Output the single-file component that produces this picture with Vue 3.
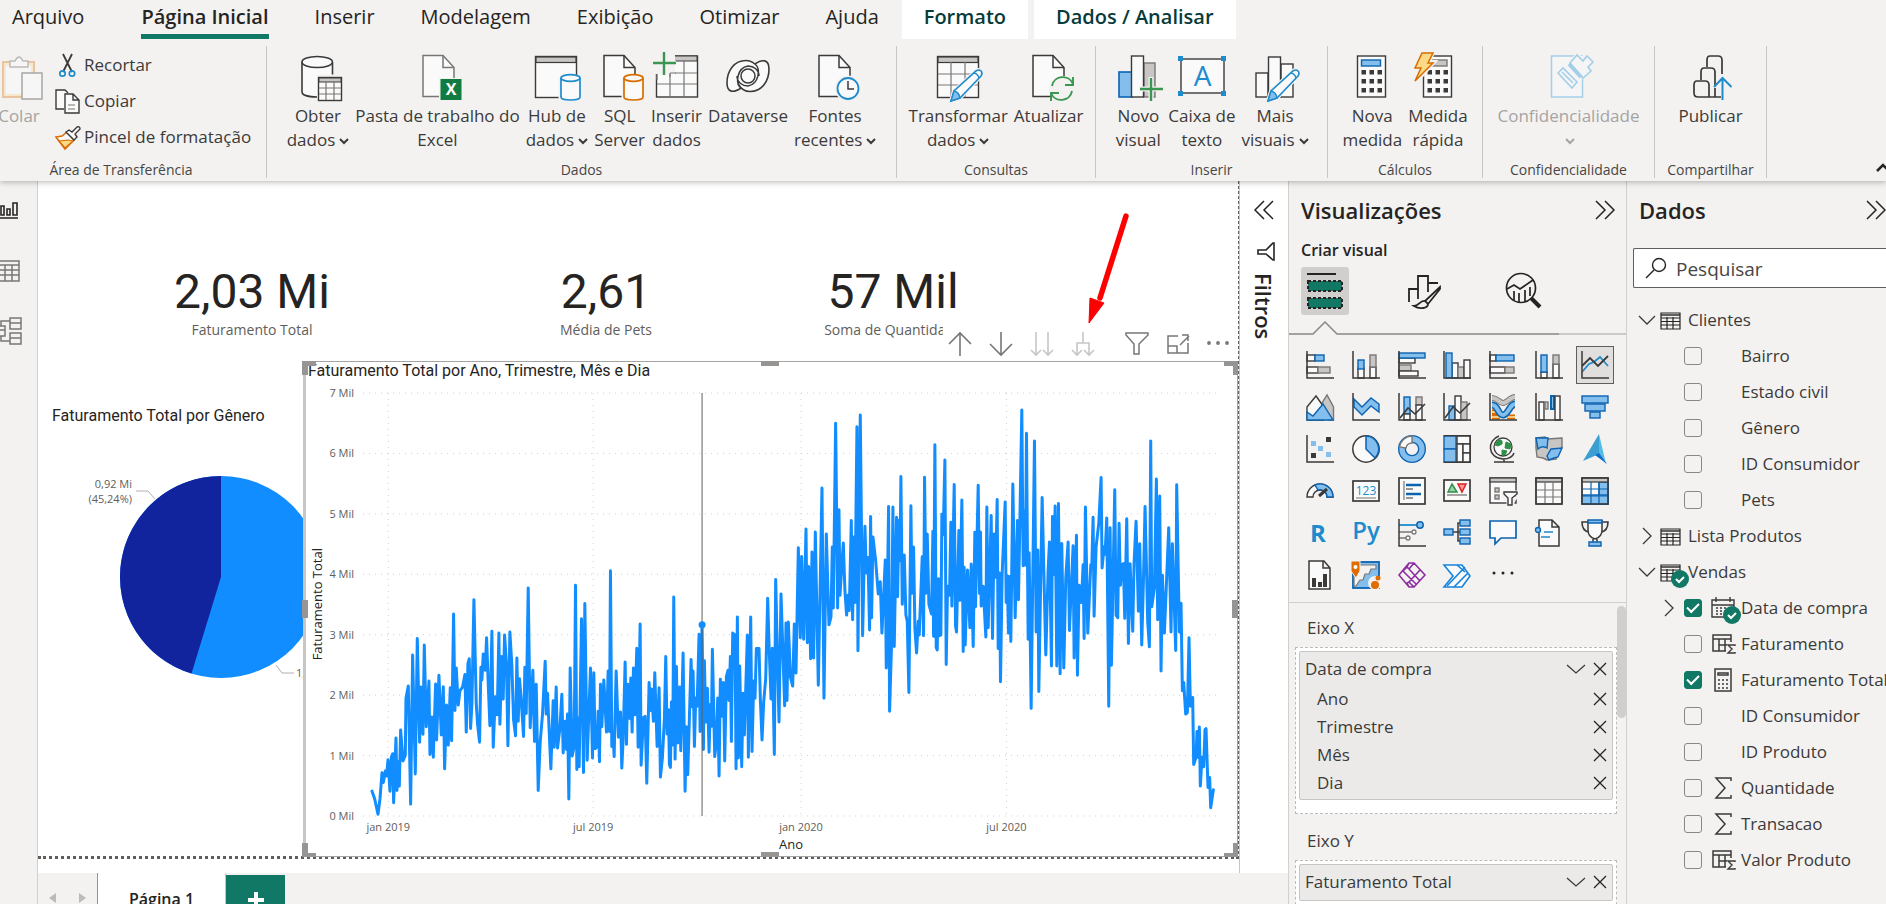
<script setup>
import { ref } from 'vue'

const DARK = '#3b3a39'
const BLUE = '#1e8bcd'
const DEEP = '#0c63b0'
const SKY = '#83beec'
const GREY = '#c8c6c4'
const MID = '#797774'
const PAPER = '#fafafa'

const box = (x, y, w, h, fill = PAPER, stroke = DARK, sw = 1.4) =>
  `<rect x="${x}" y="${y}" width="${w}" height="${h}" fill="${fill}" stroke="${stroke}" stroke-width="${sw}"/>`
const line = (d, stroke = DARK, sw = 1.4, fill = 'none') =>
  `<path d="${d}" fill="${fill}" stroke="${stroke}" stroke-width="${sw}"/>`
const page = (x, stroke = DARK) => line(`M${x} 3.5h20l11 12v29h-31z`, stroke, 1.5, PAPER) + line(`M${x + 20} 3.5v12h11`, stroke, 1.5)
const cylinder = (stroke) =>
  line('M28 26v20c0 3 19 3 19 0v-20', '#f3f2f1', 5, PAPER) +
  line('M28 26v19c0 4 19 4 19 0v-19', stroke, 1.7, PAPER) +
  `<ellipse cx="37.5" cy="26" rx="9.5" ry="3.3" fill="${PAPER}" stroke="${stroke}" stroke-width="1.7"/>`
const pencil =
  line('M17 49l3-10 22-20q3-2 5 0t0 5l-21 22z', '#f3f2f1', 4, PAPER) +
  line('M17 49l3-10 22-20q3-2 5 0t0 5l-21 22z', BLUE, 1.6, PAPER) +
  line('M17 49l3-10q5 1 6 7z', BLUE, 1.4, SKY) +
  line('M40 21q4 1 5 5', BLUE, 1.4)
const plus = (x, y) =>
  line(`M${x - 12} ${y}h24M${x} ${y - 12}v24`, '#f3f2f1', 5) + line(`M${x - 11} ${y}h23M${x} ${y - 11}v23`, '#3a9650', 2.4)
const calcKeys = (x, top) => {
  let keys = ''
  for (let r = 0; r < 3; r++) for (let c = 0; c < 3; c++) keys += `<rect x="${x + c * 8}" y="${top + r * 9}" width="4.5" height="4.5" fill="${DARK}"/>`
  return keys
}

const ribbonIcons = {
  paste:
    line('M8 10h31v35H8z', '#e8c4a0', 2, '#f6e8cf') + box(11, 14, 25, 28, '#f6f6f6', 'none', 0) +
    line('M15 9h5q4-8 8 0h5v6H15z', '#bdbbb9', 1.5, '#f6f6f6') + box(27, 21, 20, 26, '#f6f6f6', '#a9a7a5', 1.5),
  getData:
    line('M8 10v30c0 3 6 5 15 5h15V10', 'none', 0, PAPER) + line('M8 10v30c0 3 6 5 15 5M38.5 10v15', DARK, 1.6) +
    `<ellipse cx="23.2" cy="10" rx="15.2" ry="5.5" fill="${PAPER}" stroke="${DARK}" stroke-width="1.6"/>` +
    line('M23 24h17', '#f3f2f1', 3) + box(24.5, 25.5, 23, 23) + box(25, 26, 22, 4, GREY, DARK, 1) + line('M25 36h22M25 42h22M32 30v18M40 30v18', MID, 1.2),
  excel: page(10, '#797774') + '<rect x="26" y="26" width="23" height="23" fill="#f3f2f1"/><rect x="27.5" y="27" width="21" height="21" fill="#107c41"/><text x="38" y="43" text-anchor="middle" font-family="Open Sans" font-weight="700" font-size="16" fill="#fff">X</text>',
  hub: box(2.5, 4.5, 41, 41) + box(3, 5, 40, 5.5, GREY, DARK, 1.2) + cylinder(BLUE),
  sql: page(8) + cylinder('#d86c00'),
  insertData: box(3.5, 4, 41, 41) + box(4, 4, 40, 5, GREY, DARK, 1) + line('M4 21h40M4 32h40M17 9v36M31 9v36', MID, 1.2) + line('M0 3h22v19H0z', 'none', 0, '#f3f2f1') + line('M17 21h6M17 21v4M4 22v6', MID, 1.2) + plus(11, 11),
  dataverse:
    line('M34 16C31 11 27 8.5 22 8.5 10 8.5 3 19 3 31c0 10 7 10 14 5', DARK, 1.6, PAPER) +
    line('M14 32c3 5 7 7.5 12 7.5C38 39.5 45 29 45 17 45 7 38 7 31 12', DARK, 1.6, PAPER) +
    line('M17 36c-6-5-4-20 7-22 6 0 11 4 11 10M31 12c6 5 4 20-7 22-6 0-11-4-11-10', DARK, 1.5) +
    `<circle cx="24" cy="24" r="7" fill="${PAPER}" stroke="${DARK}" stroke-width="1.5"/>`,
  recent: page(8) + `<circle cx="37" cy="36.5" r="13" fill="#f3f2f1"/><circle cx="37" cy="36.5" r="10.5" fill="${PAPER}" stroke="${BLUE}" stroke-width="1.8"/>` + line('M37 29v8h6', DARK, 1.5),
  transform: box(3.5, 4.5, 41, 41) + box(4, 5, 40, 5.5, GREY, DARK, 1.2) + line('M4 22h40M4 33h40M17 10v35M31 10v35', MID, 1.2) + pencil,
  refresh: page(8) + '<circle cx="37" cy="37" r="13" fill="#f3f2f1"/>' + line('M27 34c2-11 17-12 21-2M48 25v8h-8M47 39c-2 11-17 12-21 2M26 49v-8h8', '#3a9650', 1.9),
  newVisual: box(30, 11, 11, 34, GREY, MID) + box(5, 20, 13, 25, SKY, DEEP, 1.6) + box(17.5, 4, 12, 41) + plus(37, 37),
  textBox: box(3, 7, 43, 34) + `<g fill="${BLUE}"><rect x="0" y="4" width="5" height="5"/><rect x="43" y="4" width="5" height="5"/><rect x="0" y="39" width="5" height="5"/><rect x="43" y="39" width="5" height="5"/></g><text x="24.5" y="34" text-anchor="middle" font-family="Open Sans" font-size="28" fill="${BLUE}">A</text>`,
  moreVisuals: box(5, 21, 12, 24) + box(30, 12, 12, 33) + box(17.5, 5, 12, 40) + pencil,
  measure: box(9.5, 4, 28, 41) + box(13.5, 8, 19, 6, SKY, DEEP) + calcKeys(13.5, 18),
  quick: box(9.5, 4, 28, 41) + box(17, 8, 16, 6, GREY, MID) + calcKeys(13.5, 18) + line('M7 0h12l-4 10h5L2 30l5-14H1z', '#f3f2f1', 4) + line('M8 1h11l-5 10h5L1 29l6-13H1z', '#d86c00', 1.5, '#fbd986'),
  label: box(7.5, 4, 31, 41, '#f5f5f5', '#a3cfe8', 1.5) + line('M26 11l7-8 5 4 5-5 6 7-5 5 3 4-8 7z', '#f3f2f1', 4, '#f5f5f5') + line('M26 11l7-8 6 6 4-5 6 6-5 5 3 4-8 7z', '#a3cfe8', 1.6, '#f5f5f5') + line('M25 12l12 13', '#a3cfe8', 4) + line('M14 21l5-5 14 14-5 6zM18 20l11 11', '#a3cfe8', 1.6, '#f5f5f5'),
  publish: line('M35 22V8q0-4-4-4h-8q-3 0-3 4v7M28 33V20q0-4-4-4h-7q-3 0-3 4v8M34 45h-12V33q0-4-4-4h-8q-3 0-3 4v8q0 4 4 4h12M28 36v9', DARK, 1.7) + line('M35.5 48V26M27 35l8.5-9 9 9', BLUE, 2),
}

const smallIcons = {
  cut: line('M8 1l9 18M17 1L8 19', DARK, 1.8) + `<circle cx="7.5" cy="20.5" r="2.7" fill="none" stroke="${BLUE}" stroke-width="1.7"/><circle cx="17" cy="20.5" r="2.7" fill="none" stroke="${BLUE}" stroke-width="1.7"/>`,
  copy: line('M9 20H1V1h9l3 3', DARK, 1.4, PAPER) + line('M10 5h8l6 6v13H10zM18 5v6h6', DARK, 1.4, PAPER) + line('M13 16h7M13 20h7', MID, 1.2),
  brush: line('M1 12l6-1 5-4 7 8-9 9z', '#d86c00', 1.6, PAPER) + line('M4 16l9-1 5 1-8 7z', '#d86c00', 1.2, '#fbd986') + line('M11 7l3-2 3 2 5-5q3-1 3 2l-5 5 2 3-3 3z', DARK, 1.4, PAPER),
}

const axis = line('M1 0v27h27', DARK, 1.5)
const vizIcons = [
  { name: 'Gráfico de barras empilhadas', svg: box(1, 4, 8, 6) + box(9, 4, 9, 6, SKY, DEEP) + box(1, 16, 11, 6) + box(12, 16, 12, 6, GREY, MID) + axis },
  { name: 'Gráfico de colunas empilhadas', svg: box(6, 17, 6, 10) + box(6, 9, 6, 9, SKY, DEEP) + box(18, 16, 6, 11) + box(18, 4, 6, 12, GREY, MID) + axis },
  { name: 'Gráfico de barras clusterizado', svg: box(1, 7, 16, 5) + box(1, 14, 12, 6, GREY, MID) + box(1, 20, 19, 5) + box(1, 2, 26, 5, SKY, DEEP) + axis },
  { name: 'Gráfico de colunas clusterizado', svg: box(9, 12, 6, 15) + box(15, 16, 6, 11, GREY, MID) + box(21, 9, 6, 18) + box(3, 2, 6, 25, SKY, DEEP) + axis },
  { name: 'Gráfico 100% de barras empilhadas', svg: box(1, 4, 6, 6) + box(7, 4, 18, 6, SKY, DEEP) + box(1, 16, 15, 6) + box(16, 16, 9, 6, GREY, MID) + axis },
  { name: 'Gráfico 100% de colunas empilhadas', svg: box(6, 21, 6, 6) + box(6, 4, 6, 17, SKY, DEEP) + box(18, 13, 6, 14) + box(18, 4, 6, 9, GREY, MID) + axis },
  { name: 'Gráfico de linhas', selected: true, svg: line('M1 21l7-8 5-2 6-5 8 9', BLUE, 1.8) + line('M1 15l8-8 8 8 10-10', DARK, 1.8) + axis },
  { name: 'Gráfico de área', svg: line('M27.5 27V14L21 2l-8 13 9 12z', MID, 1.4, GREY) + line('M1 27V14l9-11 10 14-2 10z', DARK, 1.4, PAPER) + line('M1 27v-8l6 4 10-12 10 16z', DEEP, 1.4, SKY) },
  { name: 'Gráfico de área empilhada', svg: line('M2 6l8 8 9-9 8 6v8l-8-6-9 9-8-8z', DEEP, 1.4, SKY) + axis },
  { name: 'Linha e coluna empilhada', svg: box(6, 4, 6, 17, SKY, DEEP) + box(6, 21, 6, 6) + box(18, 4, 6, 8, GREY, MID) + box(18, 12, 6, 15) + line('M2 25l8-10 7 6 10-10', DARK, 1.6) + axis },
  { name: 'Linha e coluna clusterizada', svg: box(6, 13, 6, 14, SKY, DEEP) + box(12, 3, 6, 24) + box(18, 9, 6, 18, GREY, MID) + line('M2 25l8-11 7 6 10-10', DARK, 1.6) + axis },
  { name: 'Gráfico da faixa de opções', svg: line('M3 19h5M20 13h6M3 24h8M18 24h8', '#d86c00', 5) + line('M3 19h5M20 13h6M3 24h8M18 24h8', '#fbc97b', 2) + line('M3 5c6 0 7 5 11 5s7-6 12-6', MID, 6) + line('M3 5c6 0 7 5 11 5s7-6 12-6', GREY, 4) + line('M3 12c6 0 6 10 11 10s7-11 12-11', DEEP, 7) + line('M3 12c6 0 6 10 11 10s7-11 12-11', SKY, 4) + axis },
  { name: 'Gráfico de cascata', svg: box(4, 9, 5, 18) + box(10, 9, 3, 7, GREY, MID) + box(16, 3, 3, 13, SKY, DEEP, 2) + box(20, 3, 5, 24) + axis },
  { name: 'Funil', svg: box(1, 3, 26, 7, SKY, DEEP) + box(4, 11, 20, 7, SKY, DEEP) + box(9, 19, 10, 6, SKY, DEEP) },
  { name: 'Gráfico de dispersão', svg: `<g fill="${SKY}"><rect x="5" y="6" width="5" height="5"/><rect x="12" y="11" width="5" height="5"/><rect x="20" y="17" width="5" height="5"/></g><g fill="${DARK}"><rect x="20" y="2" width="5" height="5"/><rect x="5" y="18" width="5" height="5"/></g>` + axis },
  { name: 'Gráfico de pizza', svg: `<circle cx="14" cy="14" r="13.2" fill="${PAPER}" stroke="${DARK}" stroke-width="1.5"/>` + line('M14 1a13 13 0 0 1 9 22l-9-9z', DEEP, 1.5, SKY) },
  { name: 'Gráfico de rosca', svg: `<circle cx="14" cy="14" r="10" fill="none" stroke="${DEEP}" stroke-width="8"/><circle cx="14" cy="14" r="10" fill="none" stroke="${SKY}" stroke-width="5.3"/>` + line('M1.5 12a12.8 12.8 0 0 1 12.5-11v7a6 6 0 0 0-6 5z', MID, 1.4, PAPER) },
  { name: 'Treemap', svg: box(1, 1, 12, 13, SKY, DEEP) + box(1, 14, 12, 13, SKY, DEEP) + box(14, 1, 13, 8) + box(14, 9, 6, 18) + box(20, 9, 7, 9) + box(20, 18, 7, 9) + line('M.7.7h26.6v26.6H.7', DARK, 1.2) },
  { name: 'Mapa', svg: `<circle cx="14" cy="12" r="9" fill="${PAPER}" stroke="${DARK}" stroke-width="1.3"/>` + line('M9 5q5-1 4 4l-4 2-3-1zM17 7l5 2-1 5-5-1zM13 15l5 1-2 4h-3z', '#2e8f46', 1, '#2e8f46') + line('M10 1c-12 4-12 22 4 23 7 0 10-3 11-6M15 24v3M5 27h20', DARK, 1.5) },
  { name: 'Mapa coroplético', svg: line('M1 3l9-1 3 2 14-1v9l-3 4-3 8-9 1-4-2-6-1-1-9z', MID, 1.4, GREY) + line('M1 3h12l-1 10q-5-3-9 1zM16 14l11-1-4 9-4 1-5 2-2-4z', DEEP, 1.4, SKY) },
  { name: 'Azure Maps', svg: '<path d="M18-1L2 26l16-7z" fill="#3a9fd0"/><path d="M18-1l7 30-7-10z" fill="#52bde4"/><path d="M14 20l4-2 8 11z" fill="#0b6bcb"/>' },
  { name: 'Medidor', svg: line('M1 20a13 13 0 0 1 26 0h-6a7 7 0 0 0-14 0z', DARK, 1.4, PAPER) + line('M9 8a13 13 0 0 1 18 12h-6a7 7 0 0 0-9-7z', DEEP, 1.4, SKY) + line('M13 19l8-7', DARK, 3) },
  { name: 'Cartão', svg: box(1, 4, 26, 20, PAPER, DARK, 1.7) + `<text x="14" y="18" text-anchor="middle" font-family="Open Sans" font-size="12" fill="${BLUE}">123</text>` + line('M4 21h20', MID, 1) },
  { name: 'Cartão de várias linhas', svg: box(1, 1, 26, 26, PAPER, DARK, 1.7) + line('M6 4v19', MID, 1.2) + line('M8 8h15M8 17h15', DEEP, 2.3) + line('M8 12h7M8 21h7', MID, 1.5) },
  { name: 'KPI', svg: box(1, 3, 26, 21, PAPER, DARK, 1.7) + line('M5 15l4-8 5 8z', '#2e8f46', 1.5, '#9bd1a6') + line('M15 7h8l-4 8z', '#d22', 1.5, '#ff9d9d') + line('M4 18h20', MID, 1.3) },
  { name: 'Segmentação de dados', svg: box(1, 1, 26, 25) + box(1, 1, 26, 4, GREY, DARK, 1.2) + box(6, 11, 4, 4, GREY, MID) + box(6, 18, 4, 4, GREY, MID) + line('M14 15h14v5l-4 4v4h-5v-4l-5-4z', '#f3f2f1', 3) + line('M15 15h13v2l-5 4v7h-4v-7l-4-4z', DARK, 1.4, PAPER) },
  { name: 'Tabela', svg: box(1, 1, 26, 26) + box(1, 1, 26, 4, GREY, DARK, 1.2) + line('M1 13h26M1 20h26M10 5v22M18 5v22', MID, 1.2) + box(1, 1, 26, 26, 'none') },
  { name: 'Matriz', svg: box(1, 1, 26, 26) + box(18, 5, 9, 22, SKY, DEEP) + box(1, 18, 26, 9, SKY, DEEP) + box(1, 1, 26, 4, GREY, DARK, 1.2) + line('M1 12h26M1 19h26M10 5v22M18 5v22', DEEP, 1.2) + box(1, 1, 26, 26, 'none') },
  { name: 'Visual do script R', svg: `<text x="12" y="23" text-anchor="middle" font-family="Open Sans" font-weight="700" font-size="24" fill="${BLUE}">R</text>` },
  { name: 'Visual do Python', svg: `<text x="14" y="20" text-anchor="middle" font-family="Open Sans" font-weight="600" font-size="24" fill="${BLUE}">Py</text>` },
  { name: 'Principais influenciadores', svg: line('M1 6h18', BLUE, 1.8) + line('M1 13h13M1 19h7', MID, 1.3) + `<circle cx="22" cy="6" r="3.2" fill="${SKY}" stroke="${DEEP}" stroke-width="1.5"/><circle cx="16" cy="13" r="2" fill="#fff" stroke="${MID}" stroke-width="1.3"/><circle cx="10" cy="19" r="2" fill="#fff" stroke="${MID}" stroke-width="1.3"/>` + axis },
  { name: 'Árvore de decomposição', svg: line('M10 13h7M17 4h-2v18h3', DARK, 1.5) + box(1, 10, 9, 6, SKY, DEEP) + box(17, 1, 10, 6, SKY, DEEP) + box(17, 10, 10, 6, SKY, DEEP) + box(17, 19, 10, 6, SKY, DEEP) },
  { name: 'P e R', svg: line('M1 2h26v17H12l-6 6v-6H1z', DEEP, 1.7, PAPER) },
  { name: 'Narrativa', svg: line('M4 8V1h13l7 7v19H4V14M17 1v7h7', DARK, 1.5, PAPER) + line('M9 13h9M6 18h9', BLUE, 1.5) + `<circle cx="3" cy="11" r="2.5" fill="${SKY}" stroke="${DEEP}" stroke-width="1.4"/>` },
  { name: 'Metas', svg: line('M7 3H1q0 9 7 10M21 3h6q0 9-7 10', DARK, 1.6) + line('M7 2h14v9q0 7-7 9-7-2-7-9zM12 20v4h4v-4', DARK, 1.5, PAPER) + line('M7 1h14v3H7z', DEEP, 1.4, SKY) + line('M8 23h12v4H8z', DEEP, 1.4, SKY) },
  { name: 'Relatório paginado', svg: line('M3 0h15l6 7v21H3zM17 0v7h7', DARK, 1.5, PAPER) + `<g fill="${DARK}"><rect x="6" y="17" width="4" height="9"/><rect x="12" y="21" width="4" height="5"/><rect x="17" y="13" width="4" height="13"/></g>` },
  { name: 'ArcGIS Maps', svg: box(1, 1, 26, 26, SKY, DEEP, 1.8) + line('M8 4h16v4h-5l-2 5h-4l-2 6H8l-4 6H2V14z', MID, 1.2, '#f3f2f1') + '<circle cx="23" cy="22" r="7" fill="#f3f2f1"/><path d="M-1 0h9v10l-4 7-5-7z" fill="#e06c00" stroke="#f3f2f1"/><circle cx="3.5" cy="6" r="2" fill="#fff"/><circle cx="23" cy="24" r="4" fill="#e06c00"/><circle cx="26" cy="17" r="2.5" fill="#e06c00"/>' },
  { name: 'Power Apps', svg: line('M1 14L11 2h5l11 12-11 12h-5zM16 2l-5 6 11 12M11 2l-2 4 2 2M16 26l-5-5 11-12M11 26l-2-4 2-1M9 6L5 10l13 13', '#8b2fa0', 1.6) },
  { name: 'Power Automate', svg: line('M1 4h18l8 11-8 11H1l9-11z', '#1584dd', 1.6, PAPER) + line('M14 4l8 7M4 25L22 6M11 26L25 12', '#1584dd', 1.6) },
]

const ribbonGroups = [
  { label: 'Dados', size: 'g-data', buttons: [
    { icon: 'getData', lines: ['Obter', 'dados'], menu: true },
    { icon: 'excel', lines: ['Pasta de trabalho do', 'Excel'] },
    { icon: 'hub', lines: ['Hub de', 'dados'], menu: true },
    { icon: 'sql', lines: ['SQL', 'Server'] },
    { icon: 'insertData', lines: ['Inserir', 'dados'] },
    { icon: 'dataverse', lines: ['Dataverse'] },
    { icon: 'recent', lines: ['Fontes', 'recentes'], menu: true },
  ] },
  { label: 'Consultas', size: 'g-query', buttons: [
    { icon: 'transform', lines: ['Transformar', 'dados'], menu: true },
    { icon: 'refresh', lines: ['Atualizar'] },
  ] },
  { label: 'Inserir', size: 'g-insert', buttons: [
    { icon: 'newVisual', lines: ['Novo', 'visual'] },
    { icon: 'textBox', lines: ['Caixa de', 'texto'] },
    { icon: 'moreVisuals', lines: ['Mais', 'visuais'], menu: true },
  ] },
  { label: 'Cálculos', size: 'g-calc', buttons: [
    { icon: 'measure', lines: ['Nova', 'medida'] },
    { icon: 'quick', lines: ['Medida', 'rápida'] },
  ] },
  { label: 'Confidencialidade', size: 'g-label', buttons: [
    { icon: 'label', lines: ['Confidencialidade', ''], menu: true, disabled: true },
  ] },
  { label: 'Compartilhar', size: 'g-share', buttons: [{ icon: 'publish', lines: ['Publicar'] }] },
]

const clipboard = [
  { icon: 'cut', text: 'Recortar' },
  { icon: 'copy', text: 'Copiar' },
  { icon: 'brush', text: 'Pincel de formatação' },
]

const tabs = ['Inserir', 'Modelagem', 'Exibição', 'Otimizar', 'Ajuda']
const cards = [
  { id: 'card-a', value: '2,03 Mi', label: 'Faturamento Total' },
  { id: 'card-b', value: '2,61', label: 'Média de Pets' },
  { id: 'card-c', value: '57 Mil', label: 'Soma de Quantidade' },
]
const yTicks = [7, 6, 5, 4, 3, 2, 1, 0]
const xTicks = [
  { at: 265, text: 'jan 2019' },
  { at: 880, text: 'jul 2019' },
  { at: 1504, text: 'jan 2020' },
  { at: 2121, text: 'jul 2020' },
]
const left = (x) => ((x - 189) / 2570) * 100 + '%'

const series2019 =
  '216,1254 224,1275 234,1318 240,1275 246,1203 250,1230 256,1198 260,1212 264,1167 270,1254 274,1160 278,1150 281,1286 288,1106 291,1252 295,1172 298,1240 302,1084 309,1170 316,1155 318,996 325,962 332,1290 338,876 346,1206 352,830 359,1118 363,965 369,1096 373,848 379,1075 387,948 390,1152 396,1048 400,1160 407,956 410,1112 417,932 424,1098 430,964 434,1192 440,1015 445,1126 451,967 455,1114 461,762 465,1030 469,912 475,1015 480,975 488,965 495,930 499,1090 504,900 508,886 512,1080 516,1012 522,722 529,1010 533,1068 539,1118 543,910 546,945 550,873 556,918 560,828 566,980 570,1072 576,810 580,1132 586,992 592,1042 597,815 600,1068 606,880 610,998 614,820 620,905 624,1128 630,812 636,905 641,1055 647,1100 651,884 655,1060 659,942 664,1000 671,1102 675,910 679,1038 685,690 691,1078 699,918 704,1116 709,957 715,1252 721,1118 728,1040 736,893 739,1040 743,982 753,1192 760,1003 763,1132 769,965 773,1134 780,1080 786,985 790,1148 796,1060 800,1138 803,1040 807,1276 811,912 817,1156 823,1130 827,682 831,1194 834,1050 838,1186 845,775 851,1202 855,733 862,1168 872,912 878,1162 882,925 886,1136 892,1130 895,1032 899,1172 902,957 906,1075 912,945 920,1090 925,920 929,1088 932,642 936,1130 940,1100 943,1158 949,920 956,1104 962,1034 966,1190 970,1110 976,895 980,1124 984,957 990,1052 993,940 997,1090 1001,912 1005,1042 1011,857 1015,1132 1021,790 1024,1182 1031,1050 1036,1046 1041,1232 1048,952 1052,1030 1055,970 1061,1060 1065,925 1072,1130 1078,967 1082,1215 1088,1160 1094,1050 1098,880 1102,1095 1106,1028 1109,1180 1112,1188 1115,1006 1119,1126 1122,715 1126,1165 1130,908 1134,1120 1140,965 1143,1142 1150,870 1156,1254 1160,1075 1164,1208 1174,888 1178,1020 1180,920 1184,1130 1188,995 1192,1018 1198,818 1201,1088 1207,792 1211,1138 1214,892 1218,1062 1223,968 1228,1146 1232,1013 1235,1074 1238,860 1245,1158 1250,1118 1254,995 1258,1212 1262,943 1266,1046 1271,952 1275,1170 1280,936 1285,918 1288,1002 1292,880 1295,1116 1299,815 1306,820 1309,1192 1313,770 1316,1162 1320,906 1326,1186 1330,982 1334,1098 1343,820 1346,1160 1353,770 1357,1144 1362,948 1366,996 1370,858 1378,858 1382,1000 1387,1112 1392,1005 1398,942 1404,718 1408,845 1414,998 1418,857 1424,1152 1428,666 1434,910 1438,1062 1444,706 1455,1017 1459,787 1462,1002 1466,784 1472,936 1479,962 1484,790 1489,926'
const series2020 =
  '56,578 62,828 66,602 72,832 79,526 83,842 87,630 93,886 97,590 102,884 107,534 116,960 127,412 133,996 140,540 148,792 154,770 158,576 161,745 168,232 174,745 178,472 181,710 191,565 196,700 201,765 205,710 209,752 215,502 219,778 223,548 226,730 232,242 235,864 242,209 249,822 256,518 260,648 265,605 270,806 273,491 276,772 280,548 288,612 296,706 302,672 307,815 317,612 320,912 327,463 330,1032 336,840 340,465 344,852 351,493 354,714 358,502 361,614 364,380 368,735 374,598 379,765 383,782 388,980 394,461 397,704 402,576 406,802 411,870 416,782 419,820 428,603 432,822 435,382 439,704 443,540 448,735 456,762 460,532 462,824 466,292 470,855 473,862 477,664 480,822 484,820 487,485 491,542 496,334 500,902 504,685 510,710 514,507 517,740 524,402 528,795 531,812 538,530 541,724 547,445 551,866 554,632 557,848 564,640 571,800 575,623 581,852 586,535 588,742 596,404 600,705 603,534 605,740 611,685 619,826 622,465 626,800 635,488 639,830 644,540 648,660 653,444 656,858 660,648 663,950 668,650 677,451 680,730 683,655 687,815 690,658 694,838 700,401 707,772 714,502 717,722 727,195 731,628 735,475 738,626 741,260 746,832 749,592 755,1024 765,281 770,812 775,584 778,977 788,438 799,876 806,640 810,562 816,906 819,491 824,652 827,462 832,906 837,455 842,928 847,566 853,912 859,660 866,562 870,808 881,572 884,884 891,543 894,932 899,682 906,730 911,625 914,830 918,465 925,815 934,625 937,632 941,493 944,768 950,575 958,510 965,383 968,634 974,575 977,596 982,495 988,1018 992,522 996,904 1006,417 1010,765 1015,772 1019,510 1023,682 1028,625 1032,622 1036,774 1042,497 1047,844 1052,622 1060,810 1064,620 1070,504 1077,754 1081,567 1087,848 1092,675 1097,463 1105,784 1110,853 1114,281 1117,742 1125,690 1131,387 1135,778 1141,434 1145,920 1149,654 1155,815 1160,705 1168,522 1175,812 1179,567 1189,863 1192,403 1200,812 1205,732 1209,975 1213,952 1219,1040 1224,1036 1229,828 1233,1018 1240,994 1243,1180 1250,1160 1253,1088 1256,1160 1260,1076 1263,1240 1268,1160 1273,1186 1277,1083 1280,1080 1286,1244 1291,1216 1294,1300 1302,1250'
const shifted = series2020
  .split(' ')
  .map((p) => p.split(','))
  .map(([x, y]) => `${+x + 1440},${y}`)
  .join(' ')
const points = series2019 + ' ' + shifted

const G = '#797774'
const L = '#c8c6c4'
const chartTools = [
  { name: 'Fazer drill up', svg: line('M14 26V3M3 14L14 3l11 11', G, 1.6) },
  { name: 'Fazer drill down', svg: line('M14 2v23M3 14l11 11 11-11', G, 1.6) },
  { name: 'Próximo nível', svg: line('M8 2v23M3 20l5 5 5-5M20 2v23M15 20l5 5 5-5', L, 1.6) },
  { name: 'Expandir nível', svg: line('M14 2v11M8 25V13h12v12M3 20l5 5 5-5M15 20l5 5 5-5', L, 1.6) },
  { name: 'Filtros', wide: true, svg: line('M3 3h22v2l-9 9v10h-5V14L3 5z', G, 1.5) },
  { name: 'Modo de foco', svg: line('M14 6H4v17h20V13M4 16h9v7M16 15l9-9M18 5h6v6', G, 1.5) },
  { name: 'Mais opções', svg: `<g fill="${G}"><circle cx="4" cy="13" r="1.9"/><circle cx="13" cy="13" r="1.9"/><circle cx="22" cy="13" r="1.9"/></g>` },
]

const tableGlyph = line('M1 3h19v16H1zM1 8h19M1 11.5h19M1 15h19M7 7v12M13 7v12', '#252423', 1.2) + line('M1 5h19', '#252423', 1.4)
const fieldIcons = {
  date: line('M1 4h22v17H1zM1 9h22M5 1v5M19 1v5', DARK, 1.4) + '<path d="M5 12h14M5 15h14M5 18h14" stroke="#3b3a39" stroke-width="1.5" stroke-dasharray="2 2"/>',
  calcColumn: line('M20 10V3H2v16h13M2 7h18M8 7v12M14 7v12M8 13h8', DARK, 1.5) + line('M24 14v-1h-7l4 4-4 4h7v-1', DARK, 1.4),
  measure: line('M4 1h16v22H4zM7 5h10v2H7z', DARK, 1.5) + '<path d="M7 12h11M7 16h11M7 20h11" stroke="#3b3a39" stroke-width="1.5" stroke-dasharray="2 2"/>',
  sum: line('M20 5V2H5l9 10L5 22h15v-3', DARK, 1.5),
}
const tables = ref([
  { name: 'Clientes', open: true, fields: [
    { name: 'Bairro' }, { name: 'Estado civil' }, { name: 'Gênero' }, { name: 'ID Consumidor' }, { name: 'Pets' },
  ] },
  { name: 'Lista Produtos', open: false, fields: [] },
  { name: 'Vendas', open: true, used: true, fields: [
    { name: 'Data de compra', icon: 'date', on: true, nested: true, used: true },
    { name: 'Faturamento', icon: 'calcColumn' },
    { name: 'Faturamento Total', icon: 'measure', on: true },
    { name: 'ID Consumidor' },
    { name: 'ID Produto' },
    { name: 'Quantidade', icon: 'sum' },
    { name: 'Transacao', icon: 'sum' },
    { name: 'Valor Produto', icon: 'calcColumn' },
  ] },
])
const hierarchy = ['Ano', 'Trimestre', 'Mês', 'Dia']
const chevronDown = line('M2 6l9 8 9-8', '#3b3a39', 1.3)
const cross = line('M4 4l12 12M16 4L4 16', '#252423', 1.3)
</script>

<template>
  <div class="app">
    <header class="ribbon">
      <nav class="tabs">
        <button class="tab file">Arquivo</button>
        <button class="tab active"><span>Página Inicial</span></button>
        <button v-for="t in tabs" :key="t" class="tab">{{ t }}</button>
        <button class="tab context">Formato</button>
        <button class="tab context">Dados / Analisar</button>
      </nav>
      <div class="groups">
        <section class="group g-clip">
          <div class="clip-body">
            <button class="tool paste" disabled>
              <svg class="tool-icon" viewBox="0 0 48 48" v-html="ribbonIcons.paste"></svg>
              <span>Colar</span>
            </button>
            <div class="clip-list">
              <button v-for="c in clipboard" :key="c.icon" class="clip-item">
                <svg viewBox="0 0 25 25" v-html="smallIcons[c.icon]"></svg>{{ c.text }}
              </button>
            </div>
          </div>
          <h2 class="clip-label">Área de Transferência</h2>
        </section>
        <section v-for="g in ribbonGroups" :key="g.label" class="group" :class="g.size">
          <div class="tools">
            <button v-for="b in g.buttons" :key="b.icon" class="tool" :disabled="b.disabled">
              <svg class="tool-icon" viewBox="0 0 48 48" v-html="ribbonIcons[b.icon]"></svg>
              <span v-for="(t, i) in b.lines" :key="i">{{ t }}<svg v-if="b.menu && i === 1" class="caret" viewBox="0 0 10 10"><path d="M1 3l4 4 4-4" fill="none" stroke="currentColor" stroke-width="2" /></svg></span>
            </button>
          </div>
          <h2>{{ g.label }}</h2>
        </section>
        <button class="collapse" aria-label="Recolher faixa de opções">
          <svg viewBox="0 0 14 10"><path d="M1 9l6-6 6 6" fill="none" stroke="#252423" stroke-width="2.5" /></svg>
        </button>
      </div>
    </header>

    <main class="work">
      <nav class="rail">
        <button aria-label="Exibição de relatório"><svg viewBox="0 0 22 22"><path d="M-6 18h24M1 6h3v9H1zM7 9h3v6H7zM13 3h4v12h-4z" fill="none" stroke="#252423" stroke-width="1.6" /></svg></button>
        <button aria-label="Exibição de dados"><svg viewBox="0 0 22 22"><path d="M-2 1h21v20H-2M0 5h19M0 10h19M0 15h19M5 5v16M12 5v16" fill="none" stroke="#797774" stroke-width="1.5" /></svg></button>
        <button aria-label="Exibição de modelo"><svg class="model" viewBox="0 0 22 28"><path d="M10 1h11v11H10zM10 6h11M10 16h11v11H10zM10 21h11M-2 9h7v10h-7M-2 13h7M1 9V4h9M1 19v5h9" fill="none" stroke="#797774" stroke-width="1.5" /></svg></button>
      </nav>

      <div class="report">
        <div class="report-top">
          <div class="canvas">
            <div v-for="c in cards" :key="c.id" class="card" :class="c.id">
              <strong>{{ c.value }}</strong>
              <span>{{ c.label }}</span>
            </div>

            <section class="pie">
              <h3>Faturamento Total por Gênero</h3>
              <svg viewBox="0 0 300 260" role="img" aria-label="Faturamento Total por Gênero">
                <circle cx="169" cy="142" r="101" fill="#118dff" />
                <path d="M169 142V41a101 101 0 0 0-29.5 197.6z" fill="#12239e" />
                <path d="M84 56h12l7 8M224 230l6 8h12" fill="none" stroke="#b3b0ad" />
                <text x="80" y="53" text-anchor="end">0,92 Mi</text>
                <text x="80" y="68" text-anchor="end">(45,24%)</text>
                <text x="244" y="242">1,11 Mi</text>
              </svg>
            </section>

            <div class="chart-tools">
              <button v-for="t in chartTools" :key="t.name" :aria-label="t.name" :class="{ wide: t.wide }">
                <svg viewBox="0 0 28 28" v-html="t.svg"></svg>
              </button>
            </div>

            <section class="chart">
              <h3>Faturamento Total por Ano, Trimestre, Mês e Dia</h3>
              <div class="chart-body">
                <div class="y-title"><span>Faturamento Total</span></div>
                <div class="y-axis"><span v-for="t in yTicks" :key="t">{{ t }} Mil</span></div>
                <div class="plot">
                  <svg viewBox="189 148 2570 1175" preserveAspectRatio="none" role="img" aria-label="Faturamento Total por data">
                    <g class="grid">
                      <path v-for="t in yTicks" :key="t" :d="`M189 ${148 + t * 167.857}H2759`" />
                      <path v-for="t in xTicks" :key="t.at" :d="`M${t.at} 148V1323`" />
                    </g>
                    <polyline :points="points" />
                    <path class="cross" d="M1207 148V1323" />
                    <path class="dot" d="M1207 792h.1" />
                  </svg>
                </div>
                <div class="x-axis">
                  <span v-for="t in xTicks" :key="t.at" :style="{ left: left(t.at) }">{{ t.text }}</span>
                </div>
                <div class="x-title">Ano</div>
              </div>
              <i class="h tl"></i><i class="h tm"></i><i class="h tr"></i><i class="h ml"></i>
              <i class="h mr"></i><i class="h bl"></i><i class="h bm"></i><i class="h br"></i>
            </section>

            <svg class="arrow" viewBox="0 0 44 112">
              <path d="M39 4L13 86" stroke="#f00" stroke-width="5.5" stroke-linecap="round" />
              <path d="M2 111l1-25 14 5z" fill="#f00" stroke="#f00" />
            </svg>
          </div>
          <aside class="filters">
            <button aria-label="Expandir filtros"><svg viewBox="0 0 20 20"><path d="M10 1L1 10l9 9M19 1l-9 9 9 9" fill="none" stroke="#252423" stroke-width="1.5" /></svg></button>
            <svg class="funnel" viewBox="0 0 20 20"><path d="M20 1v17h-1l-7-6H4V8h8l7-7z" fill="none" stroke="#252423" stroke-width="1.6" /></svg>
            <h2>Filtros</h2>
          </aside>
        </div>
        <footer class="pages">
          <div class="pager">
            <button aria-label="Página anterior"><svg viewBox="0 0 10 12"><path d="M8 1v10L1 6z" fill="#bdbbb9" /></svg></button>
            <button aria-label="Próxima página"><svg viewBox="0 0 10 12"><path d="M2 1v10l7-5z" fill="#bdbbb9" /></svg></button>
          </div>
          <button class="page-tab">Página 1</button>
          <button class="add" aria-label="Nova página"><svg viewBox="0 0 18 18"><path d="M9 1v16M1 9h16" stroke="#fff" stroke-width="4" /></svg></button>
        </footer>
      </div>

      <aside class="viz">
        <div class="pane-head">
          <h2>Visualizações</h2>
          <button aria-label="Recolher"><svg viewBox="0 0 20 20"><path d="M1 1l9 9-9 9M10 1l9 9-9 9" fill="none" stroke="#252423" stroke-width="1.5" /></svg></button>
        </div>
        <h3>Criar visual</h3>
        <div class="modes">
          <button class="mode on" aria-label="Criar visual"><svg viewBox="0 0 48 48"><path d="M6 7h29" stroke="#252423" stroke-width="2" /><g fill="#117865" stroke="#252423" stroke-width="2" stroke-dasharray="3 2"><rect x="7" y="14" width="34" height="10" /><rect x="7" y="31" width="34" height="10" /></g></svg></button>
          <button class="mode" aria-label="Formatar visual"><svg viewBox="0 0 48 48" fill="none" stroke="#252423" stroke-width="1.8"><path d="M9 35V22h9M18 32V9h10v16M28 16h10" /><path d="M40 20L25 34l3 3 12-15zM25 34c-5-1-6 5-11 5 6 4 14 2 14-2" /></svg></button>
          <button class="mode" aria-label="Análise"><svg viewBox="0 0 48 48" fill="none" stroke="#252423" stroke-width="1.7"><circle cx="22" cy="21" r="14.5" /><path d="M8 22l7-4 6 4 13-9M15 24v9M20 26v9M26 23v12M31 20v9" /><path d="M32 31l9 9" stroke-width="4" /></svg></button>
        </div>
        <svg class="notch" viewBox="0 0 337 14" preserveAspectRatio="xMinYMin slice"><path d="M0 13h24l12-12 12 12h222" fill="none" stroke="#8a8886" stroke-width="1.5" /><path d="M270 13h90" stroke="#bdbbb9" stroke-width="1.5" /></svg>
        <div class="gallery">
          <button v-for="v in vizIcons" :key="v.name" :class="{ selected: v.selected }" :aria-label="v.name">
            <svg viewBox="0 0 28 28" v-html="v.svg"></svg>
          </button>
          <button aria-label="Obter mais visuais"><svg viewBox="0 0 28 28"><g fill="#252423"><circle cx="5" cy="12" r="1.5" /><circle cx="14" cy="12" r="1.5" /><circle cx="23" cy="12" r="1.5" /></g></svg></button>
        </div>
        <div class="wells">
          <h4>Eixo X</h4>
          <div class="well tall">
            <div class="field">
              <div class="field-head">
                <span>Data de compra</span>
                <button aria-label="Opções"><svg viewBox="0 0 20 20" v-html="chevronDown"></svg></button>
                <button aria-label="Remover Data de compra"><svg viewBox="0 0 20 20" v-html="cross"></svg></button>
              </div>
              <div v-for="h in hierarchy" :key="h" class="level">
                <span>{{ h }}</span>
                <button :aria-label="'Remover ' + h"><svg viewBox="0 0 20 20" v-html="cross"></svg></button>
              </div>
            </div>
          </div>
          <h4>Eixo Y</h4>
          <div class="well">
            <div class="field">
              <div class="field-head">
                <span>Faturamento Total</span>
                <button aria-label="Opções"><svg viewBox="0 0 20 20" v-html="chevronDown"></svg></button>
                <button aria-label="Remover Faturamento Total"><svg viewBox="0 0 20 20" v-html="cross"></svg></button>
              </div>
            </div>
          </div>
          <i class="thumb"></i>
        </div>
      </aside>

      <aside class="data">
        <div class="pane-head">
          <h2>Dados</h2>
          <button aria-label="Recolher"><svg viewBox="0 0 20 20"><path d="M1 1l9 9-9 9M10 1l9 9-9 9" fill="none" stroke="#252423" stroke-width="1.5" /></svg></button>
        </div>
        <label class="search">
          <svg viewBox="0 0 22 22"><circle cx="14" cy="8" r="6.5" fill="none" stroke="#252423" stroke-width="1.4" /><path d="M9 13l-8 8" stroke="#252423" stroke-width="1.4" /></svg>
          <input type="text" placeholder="Pesquisar" aria-label="Pesquisar" />
        </label>
        <ul class="tree">
          <li v-for="t in tables" :key="t.name">
            <button class="table-row" @click="t.open = !t.open">
              <svg class="chev" viewBox="0 0 18 18"><path :d="t.open ? 'M1 5l8 8 8-8' : 'M5 1l8 8-8 8'" fill="none" stroke="#3b3a39" stroke-width="1.3" /></svg>
              <span class="glyph">
                <svg viewBox="0 0 21 21" v-html="tableGlyph"></svg>
                <svg v-if="t.used" class="badge" viewBox="0 0 18 18"><circle cx="9" cy="9" r="9" fill="#117865" /><path d="M5 9l3 3 5-5" fill="none" stroke="#fff" stroke-width="2" /></svg>
              </span>
              {{ t.name }}
            </button>
            <ul v-if="t.open">
              <li v-for="f in t.fields" :key="f.name" class="field-row">
                <svg v-if="f.nested" class="chev small" viewBox="0 0 18 18"><path d="M5 1l8 8-8 8" fill="none" stroke="#3b3a39" stroke-width="1.3" /></svg>
                <label>
                  <input v-model="f.on" type="checkbox" />
                  <span class="glyph">
                    <svg v-if="f.icon" viewBox="0 0 24 24" v-html="fieldIcons[f.icon]"></svg>
                    <svg v-if="f.used" class="badge" viewBox="0 0 18 18"><circle cx="9" cy="9" r="9" fill="#117865" /><path d="M5 9l3 3 5-5" fill="none" stroke="#fff" stroke-width="2" /></svg>
                  </span>
                  {{ f.name }}
                </label>
              </li>
            </ul>
          </li>
        </ul>
      </aside>
    </main>
  </div>
</template>

<style>
body {
  margin: 0;
  background: #f3f2f1;
}
</style>

<style scoped>
* {
  box-sizing: border-box;
}
.app {
  display: flex;
  flex-direction: column;
  height: 100vh;
  overflow: hidden;
  font: 17px/24px 'Open Sans', 'Noto Sans', sans-serif;
  color: #3b3a39;
  background: #f3f2f1;
}
button {
  font: inherit;
  color: inherit;
  background: none;
  border: 0;
  padding: 0;
}
h2, h3, h4, ul {
  margin: 0;
  padding: 0;
  list-style: none;
}
svg {
  display: block;
  overflow: visible;
}

/* Ribbon */
.ribbon {
  position: relative;
  z-index: 2;
  flex: none;
  background: #f3f2f1;
  box-shadow: 0 1px 6px rgba(0, 0, 0, 0.3);
}
.tabs {
  display: flex;
  height: 39px;
}
.tab {
  padding: 0 23px 6px;
  font-size: 20px;
  line-height: 28px;
  color: #252423;
  white-space: nowrap;
}
.tab.file {
  padding: 0 34px 6px 12px;
}
.tab.active {
  padding: 0 23px;
  font-weight: 600;
}
.tab.active span {
  display: block;
  height: 39px;
  line-height: 33px;
  border-bottom: 5px solid #117865;
}
.tab.context {
  padding: 0 22px 6px;
  font-weight: 600;
  color: #073b3a;
  background: #fff;
}
.tab.context + .tab.context {
  margin-left: 6px;
}
.groups {
  display: flex;
  height: 142px;
  padding: 7px 0 3px;
  overflow: hidden;
}
.group {
  flex: none;
  display: flex;
  flex-direction: column;
  justify-content: space-between;
  border-right: 1px solid #c8c6c4;
}
.group h2 {
  font-size: 14px;
  font-weight: 400;
  line-height: 16px;
  text-align: center;
  color: #484644;
}
.g-clip { width: 267px; }
.g-data { width: 630px; }
.g-query { width: 199px; }
.g-insert { width: 232px; }
.g-calc { width: 155px; }
.g-label { width: 172px; }
.g-share { width: 112px; }
.tools {
  display: flex;
  justify-content: center;
}
.tool {
  display: flex;
  flex-direction: column;
  align-items: center;
  padding: 6px 3px 0;
  white-space: nowrap;
}
.tool:disabled {
  color: #a6a4a2;
}
.tool span {
  min-height: 24px;
}
.tool-icon {
  width: 48px;
  height: 48px;
  margin-bottom: 4px;
}
.caret {
  display: inline-block;
  width: 10px;
  height: 10px;
  margin-left: 4px;
}
.clip-body {
  display: flex;
}
.paste {
  width: 48px;
  margin-left: -5px;
}
.clip-list {
  display: flex;
  flex-direction: column;
  padding: 1px 0 0 12px;
}
.clip-item {
  display: flex;
  align-items: center;
  gap: 4px;
  height: 36px;
  white-space: nowrap;
}
.clip-item svg {
  width: 25px;
  height: 25px;
}
.group .clip-label {
  padding-right: 24px;
}
.collapse {
  align-self: flex-end;
  flex: none;
  margin: 0 -4px 6px auto;
}
.collapse svg {
  width: 14px;
  height: 10px;
}

/* Work area */
.work {
  display: flex;
  flex: 1;
  min-height: 0;
}
.rail {
  flex: none;
  width: 38px;
  border-right: 1px solid #d2d0ce;
}
.rail button {
  display: flex;
  align-items: center;
  width: 100%;
  height: 60px;
}
.rail svg {
  width: 22px;
  height: 22px;
}
.rail .model {
  height: 28px;
}
.report {
  display: flex;
  flex: 1;
  flex-direction: column;
  min-width: 0;
}
.report-top {
  display: flex;
  flex: 1;
  min-height: 0;
  background: #fff;
}
.canvas {
  position: relative;
  flex: 1;
  min-width: 0;
  margin-bottom: 14px;
  border-right: 1px dashed #605e5c;
  border-bottom: 3px dotted #605e5c;
}

/* Visuals placed on the report canvas */
.card {
  position: absolute;
  top: 81px;
  display: flex;
  flex-direction: column;
  align-items: center;
  width: 200px;
}
.card strong {
  font: 400 48px/60px Roboto, sans-serif;
  color: #252423;
}
.card span {
  font-size: 14px;
  line-height: 16px;
  color: #605e5c;
}
.card-a { left: 114px; }
.card-b { left: 468px; }
.card-c { left: 755px; }
.pie {
  position: absolute;
  top: 225px;
  left: 14px;
  width: 300px;
}
.pie h3, .chart h3 {
  font: 400 16px/20px Roboto, sans-serif;
  color: #252423;
}
.pie svg {
  width: 300px;
  height: 260px;
  margin-top: 9px;
}
.pie text {
  font-size: 11px;
  fill: #605e5c;
}
.chart-tools {
  position: absolute;
  top: 132px;
  right: 0;
  display: flex;
  gap: 13px;
  padding: 17px 5px 4px 3px;
  background: #fff;
}
.chart-tools .wide {
  margin-left: 13px;
}
.chart-tools svg {
  width: 28px;
  height: 28px;
}
.chart {
  position: absolute;
  inset: 180px 0 -1px 265px;
  display: flex;
  flex-direction: column;
  background: #fff;
  border: 1px solid #a6a4a2;
  border-left: 3px solid #c8c6c4;
}
.chart h3 {
  margin-left: 2px;
  line-height: 18px;
}
.chart-body {
  display: grid;
  flex: 1;
  grid-template: 1fr 20px 16px / 22px 35px 1fr;
  min-height: 0;
  padding: 13px 18px 4px 0;
  font-size: 11px;
  line-height: 16px;
  color: #605e5c;
}
.y-title {
  display: flex;
  align-items: center;
  justify-content: center;
  font-size: 13px;
  color: #252423;
}
.y-title span {
  writing-mode: vertical-rl;
  rotate: 180deg;
}
.y-axis {
  display: flex;
  flex-direction: column;
  justify-content: space-between;
  margin: -8px 9px -8px -20px;
  text-align: right;
}
.plot {
  min-height: 0;
}
.plot svg {
  width: 100%;
  height: 100%;
}
.plot path, .plot polyline {
  fill: none;
  vector-effect: non-scaling-stroke;
}
.grid path {
  stroke: #d2d0ce;
  stroke-dasharray: 1 5;
}
.plot polyline {
  stroke: #118dff;
  stroke-width: 3;
  stroke-linejoin: round;
  stroke-linecap: round;
}
.plot .cross {
  stroke: #605e5c;
}
.plot .dot {
  stroke: #118dff;
  stroke-width: 7;
  stroke-linecap: round;
}
.x-axis {
  position: relative;
  grid-column: 3;
}
.x-axis span {
  position: absolute;
  top: 3px;
  translate: -50%;
  white-space: nowrap;
}
.x-title {
  grid-column: 3;
  text-align: center;
  font-size: 13px;
  color: #252423;
}
.h {
  position: absolute;
  border: 0 solid #979593;
}
.tl, .tr, .bl, .br { width: 14px; height: 14px; }
.tl, .tr { top: -1px; border-top-width: 5px; }
.bl, .br { bottom: -1px; border-bottom-width: 4px; }
.tl, .bl { left: -4px; border-left-width: 6px; }
.tr, .br { right: -1px; border-right-width: 5px; }
.tm, .bm { left: 455px; width: 18px; height: 5px; background: #979593; }
.tm { top: -1px; }
.bm { bottom: -1px; }
.ml, .mr { top: 238px; width: 6px; height: 18px; background: #979593; }
.ml { left: -4px; }
.mr { right: -1px; }
.arrow {
  position: absolute;
  top: 31px;
  left: 1049px;
  width: 44px;
  height: 112px;
}

.filters {
  display: flex;
  flex: none;
  flex-direction: column;
  align-items: center;
  gap: 22px;
  width: 49px;
  padding-top: 19px;
  border-left: 1px solid #c8c6c4;
}
.filters svg, .pane-head svg {
  width: 20px;
  height: 20px;
}
.filters h2 {
  margin-top: -11px;
  font-size: 22px;
  font-weight: 600;
  color: #252423;
  writing-mode: vertical-rl;
}

/* Page tabs */
.pages {
  display: flex;
  height: 31px;
  background: #f3f2f1;
  overflow: hidden;
}
.pager {
  display: flex;
  align-items: flex-start;
  justify-content: space-around;
  width: 60px;
  padding-top: 19px;
  border-right: 1px solid #979593;
}
.pager svg {
  width: 10px;
  height: 12px;
}
.page-tab {
  height: 52px;
  width: 128px;
  font-size: 16px;
  font-weight: 600;
  color: #252423;
  background: #fff;
  border-right: 1px solid #c8c6c4;
}
.add {
  display: flex;
  justify-content: center;
  width: 59px;
  height: 50px;
  margin-top: 2px;
  padding-top: 16px;
  background: #117865;
}
.add svg {
  width: 18px;
  height: 18px;
}

/* Visualizations pane */
.viz {
  display: flex;
  flex: none;
  flex-direction: column;
  width: 339px;
  border: solid #d2d0ce;
  border-width: 0 1px;
}
.pane-head {
  display: flex;
  align-items: center;
  justify-content: space-between;
  padding: 13px 11px 0 12px;
  color: #252423;
}
.pane-head h2 {
  font-size: 22px;
  font-weight: 600;
  line-height: 32px;
}
.viz h3 {
  padding: 12px 12px 5px;
  font-size: 16px;
  font-weight: 600;
  color: #252423;
}
.modes {
  display: flex;
  gap: 51px;
  padding-left: 12px;
}
.mode {
  border-radius: 3px;
}
.mode.on {
  background: #d0cfcd;
}
.mode svg {
  width: 48px;
  height: 48px;
}
.notch {
  flex: none;
  width: 100%;
  height: 14px;
  margin-top: 6px;
  overflow: hidden;
}
.gallery {
  display: grid;
  grid-template-columns: repeat(7, 1fr);
  padding: 9px 8px 6px;
  border-bottom: 1px solid #d2d0ce;
}
.gallery button {
  display: grid;
  place-items: center;
  justify-self: center;
  width: 36px;
  height: 36px;
  margin: 3px 0;
}
.gallery .selected {
  background: #e1dfdd;
  outline: 1px solid #605e5c;
}
.gallery svg {
  width: 28px;
  height: 28px;
}
.wells {
  position: relative;
  flex: 1;
  min-height: 0;
  padding: 13px 9px 0 6px;
  overflow: hidden;
}
.wells h4 {
  padding-left: 12px;
  font-weight: 400;
}
.well {
  margin: 7px 0 15px;
  padding: 3px;
  background: #fff;
  border: 1px dashed #bdbbb9;
}
.well.tall {
  padding-bottom: 13px;
}
.field {
  padding: 1px 6px 2px 5px;
  background: #ebeae9;
  border: 1px solid #c8c6c4;
  border-radius: 2px;
}
.field-head, .level {
  display: flex;
  align-items: center;
  gap: 5px;
  height: 28px;
}
.field-head {
  height: 32px;
}
.level {
  padding-left: 12px;
}
.field span {
  flex: 1;
}
.field svg {
  width: 20px;
  height: 20px;
}
.field button:last-child {
  margin-right: -4px;
}
.thumb {
  position: absolute;
  top: 3px;
  right: 0;
  width: 9px;
  height: 112px;
  background: #d0cfcd;
  border-radius: 5px;
}

/* Data pane */
.data {
  flex: none;
  width: 259px;
}
.data .pane-head {
  padding-right: 0;
}
.search {
  display: flex;
  align-items: center;
  gap: 9px;
  height: 40px;
  margin: 22px 0 14px 6px;
  padding-left: 11px;
  background: #fff;
  border: 1px solid #605e5c;
  border-right: 0;
  border-radius: 2px 0 0 2px;
}
.search svg {
  flex: none;
  width: 22px;
  height: 22px;
}
.search input {
  width: 100%;
  min-width: 0;
  padding: 2px 0 0;
  font: inherit;
  font-size: 19px;
  border: 0;
  outline: 0;
  background: none;
}
.search input::placeholder {
  color: #484644;
}
.table-row {
  display: flex;
  align-items: center;
  height: 36px;
  padding-left: 11px;
}
.chev {
  width: 18px;
  height: 18px;
}
.table-row .glyph {
  margin: 0 7px 0 4px;
}
.table-row .glyph > svg:first-child {
  width: 21px;
  height: 21px;
}
.glyph {
  position: relative;
  flex: none;
}
.badge {
  position: absolute;
  top: 8px;
  left: 11px;
  width: 18px;
  height: 18px;
}
.field-row {
  position: relative;
  height: 36px;
  padding-left: 57px;
}
.field-row .small {
  position: absolute;
  top: 9px;
  left: 33px;
}
.field-row label {
  display: flex;
  align-items: center;
  height: 36px;
  white-space: nowrap;
}
.field-row .glyph {
  width: 24px;
  height: 24px;
  margin: 0 6px 0 9px;
}
.field-row .badge {
  top: 10px;
  left: 12px;
}
.field-row input {
  appearance: none;
  display: grid;
  place-items: center;
  flex: none;
  width: 18px;
  height: 18px;
  margin: 0;
  border: 1px solid #8a8886;
  border-radius: 3px;
}
.field-row input:checked {
  background: #117865;
  border-color: #117865;
}
.field-row input:checked::after {
  content: '';
  width: 10px;
  height: 5px;
  margin-bottom: 3px;
  border: solid #fff;
  border-width: 0 0 2px 2px;
  rotate: -45deg;
}
</style>
